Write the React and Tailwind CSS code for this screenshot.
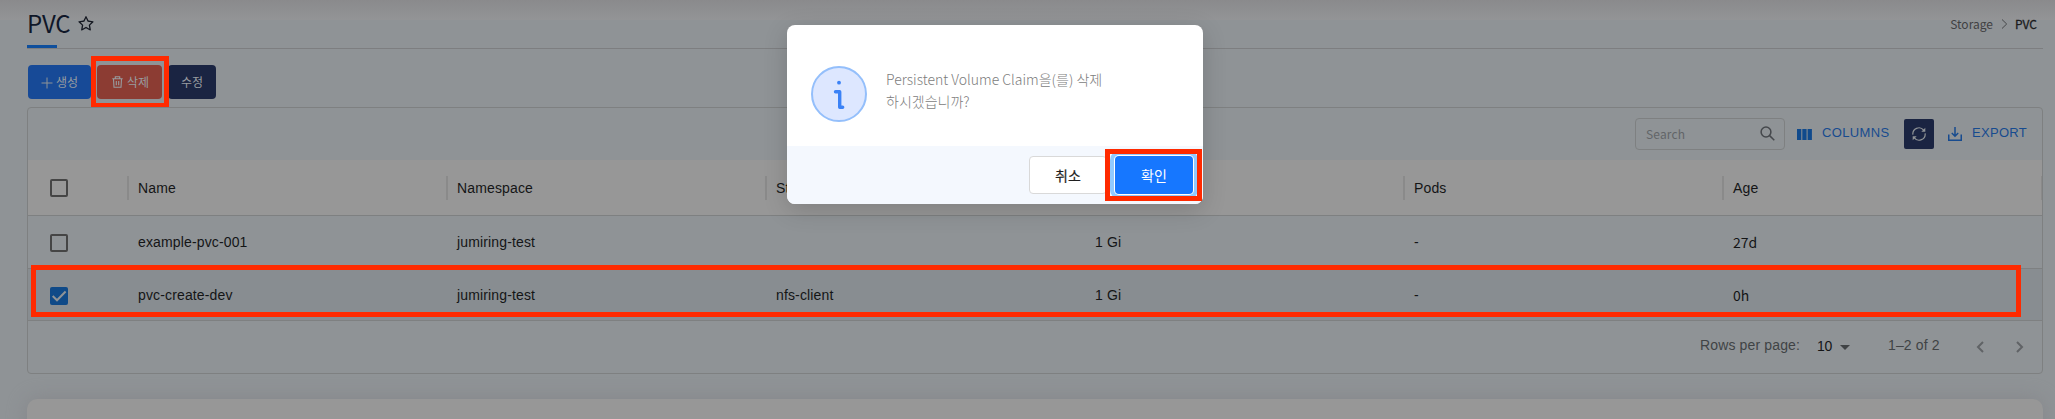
import React from "react";

const KR = "font-['Noto_Sans_CJK_KR',sans-serif]";

function Box({ checked }) {
  return (
    <span
      className={
        checked
          ? "flex size-[18px] items-center justify-center rounded-[2px] bg-[#0f4a88]"
          : "size-[18px] rounded-[2px] border-2 border-[#454545]"
      }
    >
      {checked && (
        <svg viewBox="0 0 18 18" className="size-[18px]" fill="none" stroke="#8f9396" strokeWidth="2">
          <path d="M2.7 9l4.3 4.3L15.6 4.5" />
        </svg>
      )}
    </span>
  );
}

function Chevron({ d }) {
  return (
    <svg viewBox="0 0 8 12" className="h-3 w-2" fill="none" stroke="#606366" strokeWidth="2">
      <path d={d} />
    </svg>
  );
}

const columns = ["Name", "Namespace", "Storage Class", "Capacity", "Pods", "Age"];
const rows = [
  { cells: ["example-pvc-001", "jumiring-test", "", "1 Gi", "-", "27d"], checked: false },
  { cells: ["pvc-create-dev", "jumiring-test", "nfs-client", "1 Gi", "-", "0h"], checked: true },
];

function ConfirmDialog() {
  return (
    <div
      role="dialog"
      className={"absolute top-[25px] left-[787px] flex h-[179px] w-[416px] flex-col rounded-[8px] bg-white shadow-[0_6px_24px_rgba(0,0,0,0.16)] " + KR}
    >
      <div className="flex h-[121px] shrink-0 items-start pl-6">
        <svg viewBox="0 0 56 56" className="mt-[41px] size-14 shrink-0" fill="none">
          <circle cx="28" cy="28" r="27" fill="#dde7ff" stroke="#94bffb" strokeWidth="2" />
          <circle cx="28" cy="16.700" r="1.900" fill="#3b82f6" />
          <path d="M24.500 25.800h4.200v15.400h3" stroke="#3b82f6" strokeWidth="3.400" strokeLinecap="round" strokeLinejoin="round" />
        </svg>
        <p className="mt-[44px] ml-[19px] w-[230px] text-[14px] leading-[21.500px] font-light text-[#7c7c7c]">
          Persistent Volume Claim을(를) 삭제
          <br />
          하시겠습니까?
        </p>
      </div>
      <div className="relative flex h-[58px] items-start rounded-b-[8px] bg-[#f4f8fe] pt-[10px] pl-[242px] text-[14px]">
        <button className="h-[38px] w-[78px] rounded-[4px] border border-[#d9d9d9] bg-white text-[#1f1f1f] [-webkit-text-stroke:0.2px_#1f1f1f]">취소</button>
        <button className="ml-2 h-[38px] w-[78px] rounded-[4px] bg-[#1677ff] text-white shadow-[0_0_0_1px_#ffffff,0_0_0_5px_#91caff]">확인</button>
        <span className="absolute top-[3px] left-[318px] h-[52px] w-[97px] border-[5px] border-[#ff2a00]" />
      </div>
    </div>
  );
}

export default function App() {
  return (
    <div className="relative h-[419px] w-[2055px] overflow-hidden bg-[#8f9396] font-['Liberation_Sans',sans-serif] text-sm text-[#141516]">
      <div className="absolute inset-x-0 top-0 h-[20px] bg-linear-to-b from-[#8a8a8c] to-[#939496]" />
      <div className="relative flex h-full flex-col pr-3 pl-[27px]">
        <header className="flex h-[49px] shrink-0 items-start justify-between border-b border-[#7d7e80]">
          <div className="relative flex h-[48px] items-center">
            <h1 className={"pb-0.5 text-[24px] leading-none font-normal tracking-[-0.3px] text-[#0f1728] " + KR}>PVC</h1>
            <svg viewBox="64 64 896 896" className="ml-2 size-4" fill="#141821">
              <path d="M908.1 353.1l-253.9-36.9L540.7 86.1c-3.1-6.3-8.2-11.4-14.5-14.5-15.8-7.8-35-1.3-42.9 14.5L369.8 316.2l-253.9 36.9c-7 1-13.4 4.3-18.3 9.3a32.05 32.05 0 00.6 45.3l183.7 179.1-43.4 252.9a31.95 31.95 0 0046.4 33.7L512 754l227.1 119.4c6.2 3.3 13.4 4.4 20.3 3.2 17.4-3 29.1-19.5 26.1-36.9l-43.4-252.9 183.7-179.1c5-4.9 8.3-11.3 9.3-18.3 2.7-17.5-9.5-33.7-27-36.3zM664.8 561.6l36.1 210.3L512 672.7 323.1 772l36.1-210.3-152.8-149L417.6 382 512 190.7 606.4 382l211.2 30.7-152.8 148.9z" />
            </svg>
            <span className="absolute top-[45px] left-0 h-[3px] w-[30px] bg-[#0f4f9c]" />
          </div>
          <nav className={"flex items-center pt-[15px] pr-[6px] text-[12px] leading-[18px] " + KR}>
            <span className="text-[#3f4143]">Storage</span>
            <svg viewBox="0 0 7 12" className="mr-[7px] ml-2 h-3 w-[7px]" fill="none" stroke="#46484a">
              <path d="M1 1.500l4.700 4.500L1 10.500" />
            </svg>
            <span className="text-[#1b1c1e] [-webkit-text-stroke:0.3px_#1b1c1e]">PVC</span>
          </nav>
        </header>

        <div className={"relative mt-4 ml-px flex h-[34px] shrink-0 text-[12px] text-[#989ca0] " + KR}>
          <button className="flex w-[63px] items-center rounded-[4px] bg-[#174a97] pl-[13px]">
            <svg viewBox="0 0 12 12" className="mt-0.5 mr-[3px] size-3" stroke="#8f9396" strokeWidth="1">
              <path d="M6 .5v11M.5 6h11" />
            </svg>
            <span>생성</span>
          </button>
          <button className="ml-[6px] flex w-[65px] items-center rounded-[4px] bg-[#8c3c33] pl-[15px]">
            <svg viewBox="0 0 11 12" className="mr-1 h-3 w-[11px]" fill="none" stroke="#989ca0" strokeWidth="1.100">
              <path d="M.3 2.700h10.400M3.300 2.500V.8h4.400v1.700M1.500 3l.5 8.300h7L9.500 3M4.300 5v4.300M6.700 5v4.300" />
            </svg>
            <span>삭제</span>
          </button>
          <button className="ml-[6px] flex w-[48px] items-center justify-center rounded-[4px] bg-[#1a2442]">수정</button>
          <span className="absolute top-[-9px] left-[63px] h-[52px] w-[78px] border-[5px] border-[#ff2a00]" />
        </div>

        <section className="relative mt-2 flex h-[267px] shrink-0 flex-col rounded-[4px] border border-[#7e8081] tracking-[0.14px]">
          <div className="flex h-[52px] shrink-0 items-start justify-end pr-[15px]">
            <div className={"mt-[10px] flex h-8 w-[150px] items-center justify-between rounded-[4px] border border-[#7e8081] pr-[9px] pl-[10px] text-[12px] text-[#626568] " + KR}>
              Search
              <svg viewBox="0 0 15 15" className="mb-px size-[15px]" fill="none" stroke="#45484c" strokeWidth="1.500">
                <circle cx="6" cy="6" r="4.900" />
                <path d="M9.600 9.600l4.700 4.700" />
              </svg>
            </div>
            <div className="mt-[15px] ml-3 flex items-center text-[#174b8f]">
              <svg viewBox="0 0 15 11" className="mt-[3px] h-[11px] w-[15px]" fill="#104a8c">
                <path d="M0 0h4.300v11H0zM5.300 0h4.300v11H5.300zM10.600 0h4.300v11h-4.300z" />
              </svg>
              <span className="ml-[10px] w-[68px] text-[13px] leading-5 tracking-[0.37px]">COLUMNS</span>
            </div>
            <button className="mt-[11px] ml-[14px] flex size-[30px] items-center justify-center rounded-[2px] bg-[#1a2442]">
              <svg viewBox="0 0 14 14" className="size-[14px]" fill="none" stroke="#8f9396" strokeWidth="1.200">
                <path d="M.9 7.600A6 6 0 0 1 11.600 3.200M13.100 6.400A6 6 0 0 1 2.400 10.800" />
                <path d="M13.300.8v4H9.300zM.7 13.200v-4h4z" fill="#8f9396" stroke="none" />
              </svg>
            </button>
            <div className="mt-[15px] ml-[14px] flex items-center text-[#174b8f]">
              <svg viewBox="0 0 14 14" className="mt-[2px] size-[14px]" fill="none" stroke="#174b8f" strokeWidth="1.500">
                <path d="M.75 7.500v5.750h12.500V7.500M7 0v9M3.800 6L7 9.200 10.200 6" />
              </svg>
              <span className="ml-[10px] w-[55px] text-[13px] leading-5 tracking-[0.31px]">EXPORT</span>
            </div>
          </div>

          <div className="flex h-[56px] shrink-0 items-center border-b border-[#7e8081] bg-[#979797] pl-[22px]">
            <div className="flex w-[77px] shrink-0"><Box /></div>
            {columns.map((c) => (
              <div key={c} className="flex w-[319px] shrink-0 items-center">
                <span className="h-6 w-[2px] bg-[#8a8a8a]" />
                <span className="pl-[9px]">{c}</span>
              </div>
            ))}
            <span className="h-6 w-px shrink-0 bg-[#8a8a8a]" />
          </div>

          {rows.map((r) => (
            <div
              key={r.cells[0]}
              className={
                r.checked
                  ? "flex h-[52px] shrink-0 items-center border-b border-[#7e8081] bg-[#888d91] pl-[22px]"
                  : "flex h-[53px] shrink-0 items-center border-b border-[#7e8081] pl-[22px]"
              }
            >
              <div className="flex w-[88px] shrink-0 pt-[2px]"><Box checked={r.checked} /></div>
              {r.cells.map((c, i) => (
                <span key={i} className={i === 5 ? "tracking-normal " + KR : "w-[319px] shrink-0"}>{c}</span>
              ))}
            </div>
          ))}

          <div className="flex flex-1 items-start justify-end pr-[18px] text-[#404345]">
            <span className="mt-[14px] w-[101px]">Rows per page:</span>
            <span className="mt-[15px] ml-4 w-[23px] tracking-[-0.3px] text-[#141516]">10</span>
            <svg viewBox="0 0 10 5" className="mt-6 mr-px h-[5px] w-[10px]" fill="#404345">
              <path d="M0 0h10L5 5z" />
            </svg>
            <span className="mt-[14px] ml-[37px] w-[52px]">1–2 of 2</span>
            <span className="mt-5 ml-[36px]"><Chevron d="M7 1L2 6l5 5" /></span>
            <span className="mt-5 ml-[32px]"><Chevron d="M1 1l5 5-5 5" /></span>
          </div>
          <span className="absolute top-[157px] left-[3px] h-[52px] w-[1990px] border-[5px] border-[#ff2a00]" />
        </section>

        <div className="mt-[25px] h-[60px] shrink-0 rounded-[10px] bg-[#979797] shadow-[0_0_20px_#85868a]" />
      </div>
      <ConfirmDialog />
    </div>
  );
}
